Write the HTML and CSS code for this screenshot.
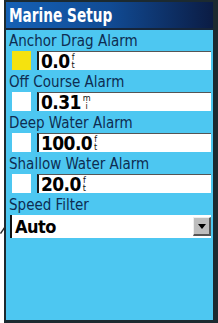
FILE: index.html
```html
<!DOCTYPE html>
<html lang="en">
<head>
    <meta charset="UTF-8">
    <meta name="viewport" content="width=device-width, initial-scale=1.0">
    <title>Marine Setup</title>
    <link rel="stylesheet" href="styles.css">
</head>
<body>
    <div class="device">
        <div class="titlebar"><span class="title-text">Marine Setup</span></div>

        <div class="panel">
            <div class="group">
                <div class="label">Anchor Drag Alarm</div>
                <div class="row">
                    <span class="check on"></span>
                    <span class="field"><span class="num">0.0</span><span class="unit"><i>f</i><i>t</i></span></span>
                </div>
            </div>

            <div class="group">
                <div class="label">Off Course Alarm</div>
                <div class="row">
                    <span class="check"></span>
                    <span class="field"><span class="num">0.31</span><span class="unit"><i>m</i><i>i</i></span></span>
                </div>
            </div>

            <div class="group">
                <div class="label">Deep Water Alarm</div>
                <div class="row">
                    <span class="check"></span>
                    <span class="field"><span class="num">100.0</span><span class="unit"><i>f</i><i>t</i></span></span>
                </div>
            </div>

            <div class="group">
                <div class="label">Shallow Water Alarm</div>
                <div class="row">
                    <span class="check"></span>
                    <span class="field"><span class="num">20.0</span><span class="unit"><i>f</i><i>t</i></span></span>
                </div>
            </div>

            <div class="group">
                <div class="label">Speed Filter</div>
                <div class="select">
                    <span class="select-text">Auto</span>
                    <span class="select-btn">
                        <svg width="8" height="5" viewBox="0 0 8 5"><polygon points="0,0 8,0 4,5" fill="#000"/></svg>
                    </span>
                </div>
            </div>
        </div>
    </div>

    <!-- callout tick from the manual page -->
    <svg class="tick" width="6" height="8" viewBox="0 0 6 8"><line x1="0.5" y1="7.5" x2="5" y2="1" stroke="#2a2a2a" stroke-width="1.4"/></svg>
</body>
</html>
```

FILE: styles.css
```css
body {
    margin: 0;
    background: #fff;
    width: 218px;
    height: 323px;
    overflow: hidden;
    position: relative;
    font-family: "DejaVu Sans Condensed", "DejaVu Sans", sans-serif;
    font-stretch: condensed;
}
.device {
    margin-left: 4px;
    width: 207px;
    height: 318px;
    border-left: 2px solid #1c2a30;
    border-right: 5px solid #1c2a30;
    border-top: 2px solid #1c2a30;
    border-bottom: 3px solid #1c2a30;
    background: #4dc7f1;
    display: flex;
    flex-direction: column;
}
.titlebar {
    height: 26px;
    line-height: 26px;
    padding-left: 3px;
    border-bottom: 2px solid #15253a;
    background: linear-gradient(to right, #1561b5 0%, #114b94 50%, #0b1c44 100%);
    color: #fff;
    font-weight: bold;
    font-size: 20px;
    white-space: nowrap;
}
.title-text {
    display: inline-block;
    transform: scaleX(0.76);
    transform-origin: left center;
}
.panel {
    flex: 1;
}
.group {
    height: 41px;
}
.label {
    height: 21px;
    line-height: 23px;
    padding-left: 3px;
    font-size: 15px;
    color: #0e2d52;
    white-space: nowrap;
}
.row {
    display: flex;
    align-items: stretch;
    height: 19px;
    gap: 6px;
    padding-left: 6px;
    padding-right: 2px;
}
.check {
    width: 19px;
    height: 19px;
    background: #fff;
}
.check.on {
    background: #f5e20f;
}
.field {
    flex: 1;
    display: flex;
    align-items: center;
    background: #fff;
    border-left: 2px solid #1a1a1a;
    border-top: 1px solid #555;
    padding-left: 2px;
    color: #000;
}
.num {
    font-weight: bold;
    font-size: 19px;
    letter-spacing: -0.6px;
    line-height: 18px;
}
.unit {
    display: flex;
    flex-direction: column;
    align-items: center;
    align-self: flex-start;
    margin-top: 1px;
    margin-left: 2px;
    color: #111;
}
.unit i {
    display: block;
    height: 8px;
    font-size: 9px;
    line-height: 8px;
    font-style: normal;
}
.select {
    display: flex;
    align-items: center;
    height: 23px;
    margin-left: 4px;
    margin-right: 2px;
    background: #fff;
    border-left: 2px solid #111;
}
.select-text {
    flex: 1;
    padding-left: 3px;
    font-weight: bold;
    font-size: 18px;
    letter-spacing: -0.5px;
}
.select-btn {
    width: 15px;
    height: 16px;
    display: flex;
    align-items: center;
    justify-content: center;
    background: #bdbdbd;
    border-top: 1px solid #eee;
    border-left: 1px solid #eee;
    border-right: 2px solid #555;
    border-bottom: 2px solid #555;
}
.tick {
    position: absolute;
    left: 0;
    top: 226px;
}
```
